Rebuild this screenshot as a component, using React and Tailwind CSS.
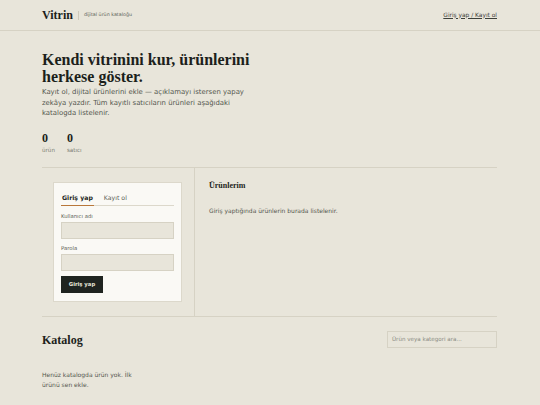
function Header() {
    return (
        <header className="border-b border-[#d6d2c4]">
            <div className="flex items-center justify-between h-[30px] pl-[42px] pr-[43px]">
                {/* Logo */}
                <div className="flex items-center gap-[5px]">
                    <span className="font-['Liberation_Serif',serif] font-bold text-[12px] text-[#1c1f1b] leading-none">Vitrin</span>
                    <span className="w-px h-[9px] bg-[#cfcabb]"></span>
                    <span className="text-[4.8px] text-[#5c5f57]">dijital ürün kataloğu</span>
                </div>
                <a className="text-[5.9px] text-[#3d403a] underline" href="#">Giriş yap / Kayıt ol</a>
            </div>
        </header>
    );
}

function Hero() {
    return (
        <section className="pt-[20px] pb-[14px]">
            <h1 className="font-['Liberation_Serif',serif] font-bold text-[16px] leading-[17px] text-[#1c1f1b] w-[230px]">
                Kendi vitrinini kur, ürünlerini herkese göster.
            </h1>
            <p className="mt-[2px] text-[6.9px] leading-[10.5px] text-[#54574f] w-[210px]">
                Kayıt ol, dijital ürünlerini ekle — açıklamayı istersen yapay zekâya yazdır. Tüm kayıtlı satıcıların ürünleri aşağıdaki katalogda listelenir.
            </p>
            <div className="flex gap-[12px] mt-[12px]">
                <div>
                    <div className="font-['Liberation_Serif',serif] font-bold text-[12px] leading-[14px] text-[#1c1f1b]">0</div>
                    <div className="text-[5.6px] leading-[6px] text-[#7a7c73] mt-[2px]">ürün</div>
                </div>
                <div>
                    <div className="font-['Liberation_Serif',serif] font-bold text-[12px] leading-[14px] text-[#1c1f1b]">0</div>
                    <div className="text-[5.6px] leading-[6px] text-[#7a7c73] mt-[2px]">satıcı</div>
                </div>
            </div>
        </section>
    );
}

function LoginCard() {
    return (
        <div className="bg-[#faf9f5] border border-[#dcd8cb] w-[129px] px-[7px] pt-[10px] pb-[8px]">
            {/* Tabs */}
            <div className="flex gap-[10px] border-b border-[#dcd8cb]">
                <div className="text-[6.2px] font-bold text-[#1c1f1b] pb-[3px] px-[1px] border-b border-[#b8773a] -mb-px">Giriş yap</div>
                <div className="text-[6.2px] text-[#5c5f57] pb-[3px]">Kayıt ol</div>
            </div>
            <label className="block text-[5.3px] leading-[7px] text-[#5c5f57] mt-[7px]">Kullanıcı adı</label>
            <div className="mt-[2.5px] h-[17px] bg-[#e8e5da] border border-[#d6d2c4]"></div>
            <label className="block text-[5.3px] leading-[7px] text-[#5c5f57] mt-[6px]">Parola</label>
            <div className="mt-[2px] h-[17px] bg-[#e8e5da] border border-[#d6d2c4]"></div>
            <button className="block mt-[5px] h-[17px] w-[42px] bg-[#1f2420] text-[#e8e5da] text-[5.3px] font-bold">Giriş yap</button>
        </div>
    );
}

function Panels() {
    return (
        <section className="grid grid-cols-[153px_1fr] border-t border-b border-[#d6d2c4] h-[150px]">
            <div className="border-r border-[#d6d2c4] pt-[14px] pl-[11px]">
                <LoginCard />
            </div>
            <div className="pl-[14px] pt-[12px]">
                <h2 className="font-['Liberation_Serif',serif] font-bold text-[8px] text-[#1c1f1b]">Ürünlerim</h2>
                <p className="mt-[14px] text-[6px] text-[#54574f]">Giriş yaptığında ürünlerin burada listelenir.</p>
            </div>
        </section>
    );
}

function Catalog() {
    return (
        <section className="pt-[14px]">
            <div className="flex items-center justify-between">
                <h2 className="font-['Liberation_Serif',serif] font-bold text-[12px] text-[#1c1f1b]">Katalog</h2>
                <div className="w-[110px] h-[17px] border border-[#d6d2c4] flex items-center px-[4px]">
                    <span className="text-[5.6px] text-[#8a8c83]">Ürün veya kategori ara...</span>
                </div>
            </div>
            <p className="mt-[21px] text-[6px] leading-[10px] text-[#54574f] w-[100px]">
                Henüz katalogda ürün yok. İlk ürünü sen ekle.
            </p>
        </section>
    );
}

export default function App() {
    return (
        <div className="min-h-[405px] bg-[#e8e5da] font-['DejaVu_Sans',sans-serif] overflow-hidden">
            <Header />
            <main className="pl-[42px] w-[540px] pr-[43px]">
                <Hero />
                <Panels />
                <Catalog />
            </main>
        </div>
    );
}
